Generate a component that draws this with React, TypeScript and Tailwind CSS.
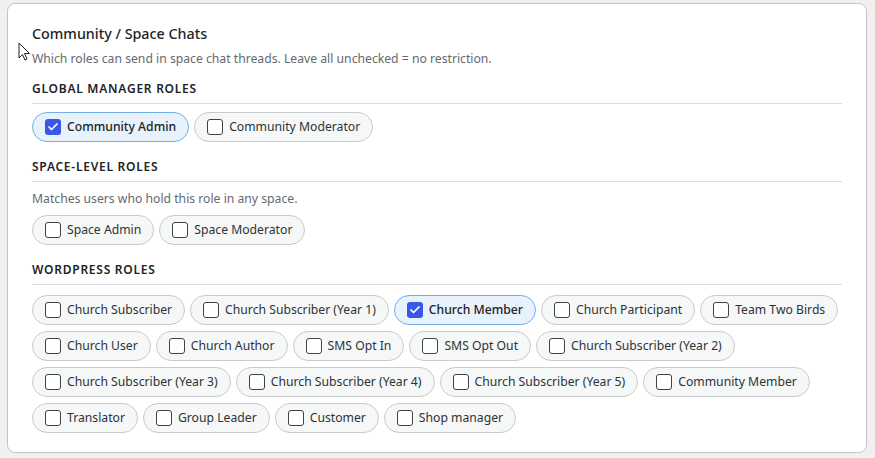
import { Check } from "lucide-react";

type Role = { label: string; checked?: boolean };

const globalRoles: Role[] = [
  { label: "Community Admin", checked: true },
  { label: "Community Moderator" },
];

const spaceRoles: Role[] = [{ label: "Space Admin" }, { label: "Space Moderator" }];

const wpRoles: Role[] = [
  { label: "Church Subscriber" },
  { label: "Church Subscriber (Year 1)" },
  { label: "Church Member", checked: true },
  { label: "Church Participant" },
  { label: "Team Two Birds" },
  { label: "Church User" },
  { label: "Church Author" },
  { label: "SMS Opt In" },
  { label: "SMS Opt Out" },
  { label: "Church Subscriber (Year 2)" },
  { label: "Church Subscriber (Year 3)" },
  { label: "Church Subscriber (Year 4)" },
  { label: "Church Subscriber (Year 5)" },
  { label: "Community Member" },
  { label: "Translator" },
  { label: "Group Leader" },
  { label: "Customer" },
  { label: "Shop manager" },
];

function RolePill({ role }: { role: Role }) {
  return (
    <label
      className={
        role.checked
          ? "flex h-[30px] items-center gap-1.5 rounded-full border border-[#72aee6] bg-[#e8f2fc] px-3 text-[12.2px] font-medium text-[#1d2327]"
          : "flex h-[30px] items-center gap-1.5 rounded-full border border-[#c9cacc] bg-[#f6f7f7] px-3 text-[12.2px] text-[#2c3338]"
      }
    >
      {role.checked ? (
        <span className="flex h-4 w-4 items-center justify-center rounded-[3px] bg-[#3858e9]">
          <Check size={12} strokeWidth={3.5} color="#fff" />
        </span>
      ) : (
        <span className="h-4 w-4 rounded-[3px] border border-[#3c434a] bg-white" />
      )}
      <span className="leading-none">{role.label}</span>
    </label>
  );
}

function Section({
  title,
  note,
  roles,
  first = false,
  listGap = "mt-2",
}: {
  title: string;
  note?: string;
  roles: Role[];
  first?: boolean;
  listGap?: string;
}) {
  return (
    <div className={first ? "mt-3" : "mt-[17px]"}>
      <div className="border-b border-[#dcdcde] pb-1.5 text-[12px] font-semibold uppercase leading-4 tracking-[0.75px] text-[#1d2327]">
        {title}
      </div>
      {note && (
        <p className="mt-2 text-[12.2px] leading-[18px] text-[#646970]">{note}</p>
      )}
      <div className={`${listGap} flex flex-wrap gap-x-[5px] gap-y-1.5`}>
        {roles.map((r) => (
          <RolePill key={r.label} role={r} />
        ))}
      </div>
    </div>
  );
}

export default function App() {
  return (
    <div
      className="relative min-h-screen bg-[#f0f0f1] pl-[7px] pr-[8px] pt-[3px]"
      style={{ fontFamily: '"Noto Sans", "Open Sans", Arial, sans-serif' }}
    >
      <div className="rounded-lg border border-[#c3c4c7] bg-white px-6 pb-[19px] pt-[20px]">
        <h3 className="text-[14.3px] font-medium leading-5 text-[#1d2327]">
          Community / Space Chats
        </h3>
        <p className="mt-[5px] text-[12.2px] leading-5 text-[#646970]">
          Which roles can send in space chat threads. Leave all unchecked = no restriction.
        </p>
        <Section title="Global Manager Roles" roles={globalRoles} first />
        <Section
          title="Space-Level Roles"
          note="Matches users who hold this role in any space."
          roles={spaceRoles}
          listGap="mt-[7px]"
        />
        <Section title="WordPress Roles" roles={wpRoles} listGap="mt-[10px]" />
      </div>
      {/* mouse cursor captured in the screenshot */}
      <svg
        className="absolute left-[18px] top-[42px]"
        width="13"
        height="20"
        viewBox="0 0 13 20"
      >
        <path
          d="M1 1 L1 16 L4.5 12.5 L7 18 L9 17 L6.5 11.5 L11.5 11.5 Z"
          fill="#fff"
          stroke="#222"
          strokeWidth="1"
          strokeLinejoin="round"
        />
      </svg>
    </div>
  );
}
